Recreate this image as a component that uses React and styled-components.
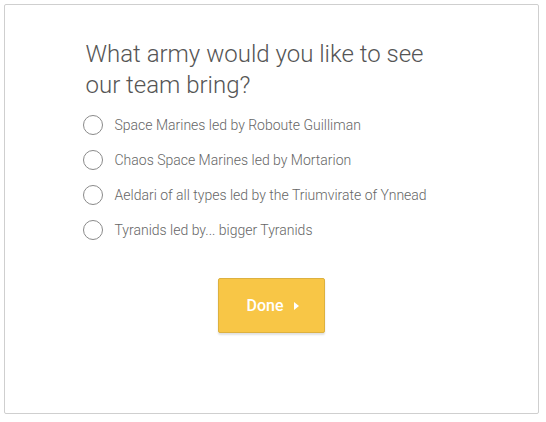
import React from 'react';
import styled, {createGlobalStyle} from 'styled-components';

const Global = createGlobalStyle`
    body {
        margin: 0;
        background: #fff;
        font-family: Roboto, "Liberation Sans", sans-serif;
    }
`

const Card = styled.div`
    box-sizing: border-box;
    width: 535px;
    height: 410px;
    margin: 4px;
    border: 1px solid #cfcfcf;
    border-radius: 2px;
    padding-top: 34px;
    display: flex;
    justify-content: center;
`

const Column = styled.div`
    width: 372px;
    display: flex;
    flex-direction: column;
`

const Title = styled.h2`
    margin: 0 0 6px;
    font-size: 24px;
    font-weight: 300;
    line-height: 31px;
    color: #555;
    width: 360px;
`

const Option = styled.label`
    display: flex;
    align-items: center;
    height: 35px;
    gap: 12px;
    font-size: 14px;
    font-weight: 300;
    color: #666;
    cursor: pointer;
`

const Radio = styled.span`
    box-sizing: border-box;
    width: 20px;
    height: 20px;
    border-radius: 50%;
    border: 1px solid #8a8a8a;
    flex-shrink: 0;
    margin-left: -3px;
`

const Done = styled.button`
    align-self: center;
    margin-top: 31px;
    width: 107px;
    height: 55px;
    border: 1px solid #ddb13f;
    border-radius: 2px;
    background: #f8c646;
    color: #fff;
    font-family: Roboto, "Liberation Sans", sans-serif;
    font-size: 16px;
    font-weight: 500;
    display: flex;
    align-items: center;
    justify-content: center;
    gap: 10px;
    box-shadow: 0 2px 2px rgba(0, 0, 0, 0.12);
    padding: 0 0 0 2px;
`

const Caret = styled.span`
    width: 0;
    height: 0;
    border-top: 4px solid transparent;
    border-bottom: 4px solid transparent;
    border-left: 5px solid #fff;
`

const options = [
    'Space Marines led by Roboute Guilliman',
    'Chaos Space Marines led by Mortarion',
    'Aeldari of all types led by the Triumvirate of Ynnead',
    'Tyranids led by... bigger Tyranids',
]

const App = () => {
    return (
        <>
            <Global/>
            <Card>
                <Column>
                    <Title>What army would you like to see our team bring?</Title>
                    {options.map(o => (
                        <Option key={o}>
                            <Radio/>
                            {o}
                        </Option>
                    ))}
                    <Done>Done <Caret/></Done>
                </Column>
            </Card>
        </>
    )
}

export default App
